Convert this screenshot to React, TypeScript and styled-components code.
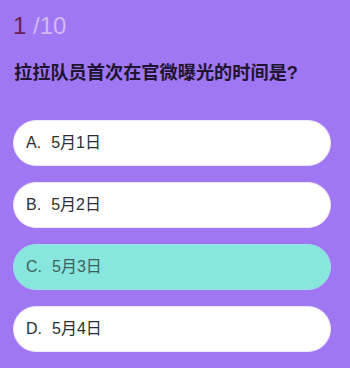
import React from "react";
import styled, { createGlobalStyle } from "styled-components";

const Global = createGlobalStyle`
  html, body {
    margin: 0;
    padding: 0;
    background: #a077f2;
  }
  body {
    font-family: "Liberation Sans", "Noto Sans CJK SC", sans-serif;
  }
`;

const Page = styled.div`
  width: 350px;
  height: 368px;
  box-sizing: border-box;
  padding: 14px 0 0 13px;
  background: #a077f2;
  display: flex;
  flex-direction: column;
  overflow: hidden;
`;

const Counter = styled.div`
  font-size: 24px;
  line-height: 24px;
  color: #d2b9f5;
`;

const Current = styled.span`
  color: #6b1d4f;
`;

const Question = styled.div`
  margin-top: 23px;
  margin-left: 1px;
  font-size: 18.2px;
  line-height: 24px;
  font-weight: 700;
  color: #1e1530;
`;

const Options = styled.div`
  margin-top: 35px;
  display: flex;
  flex-direction: column;
  gap: 16px;
`;

const Option = styled.div<{ $selected?: boolean }>`
  width: 318px;
  height: 46px;
  box-sizing: border-box;
  border-radius: 23px;
  border: 1px solid ${(p) => (p.$selected ? "#9fe0e8" : "#efe6fb")};
  background: ${(p) => (p.$selected ? "#87e6dd" : "#ffffff")};
  color: ${(p) => (p.$selected ? "#3e5f5c" : "#2e2e2e")};
  display: flex;
  align-items: center;
  padding-left: 12px;
  font-size: 16px;
`;

const Label = styled.span`
  line-height: 20px;
  white-space: nowrap;
`;

const Letter = styled.span`
  margin-right: 10px;
`;

const options = [
  { key: "A", text: "5月1日" },
  { key: "B", text: "5月2日" },
  { key: "C", text: "5月3日", selected: true },
  { key: "D", text: "5月4日" },
];

export default function App() {
  return (
    <>
      <Global />
      <Page>
        <Counter>
          <Current>1</Current> /10
        </Counter>
        <Question>拉拉队员首次在官微曝光的时间是?</Question>
        <Options>
          {options.map((o) => (
            <Option key={o.key} $selected={o.selected}>
              <Label>
                <Letter>{o.key}.</Letter>
                {o.text}
              </Label>
            </Option>
          ))}
        </Options>
      </Page>
    </>
  );
}
